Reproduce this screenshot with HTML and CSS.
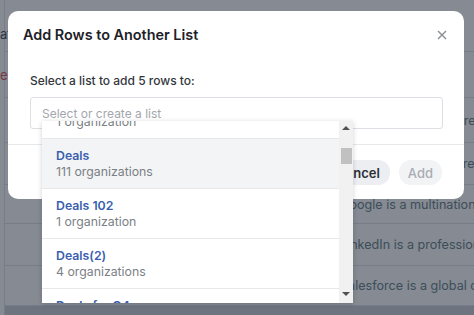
FILE: index.html
```html
<!DOCTYPE html>
<html lang="en">
<head>
    <meta charset="UTF-8">
    <meta name="viewport" content="width=device-width, initial-scale=1.0">
    <title>Add Rows to Another List</title>
    <link rel="stylesheet" href="styles.css">
</head>
<body>
    <!-- Tabel achter de modal -->
    <div class="table">
        <div class="row row-head"><span class="cell-left">ated</span></div>
        <div class="row row-2"><span class="cell-left red">ee</span></div>
        <div class="row row-3"><span class="cell-desc">Microsoft is a software company D</span></div>
        <div class="row row-4"><span class="cell-desc">Amazon is an online retail store o</span></div>
        <div class="row row-5"><span class="cell-desc">Google is a multinational technology</span></div>
        <div class="row row-6"><span class="cell-desc">LinkedIn is a professional network</span></div>
        <div class="row row-7"><span class="cell-desc">Salesforce is a global cloud company</span></div>
        <div class="table-foot"></div>
    </div>

    <div class="overlay"></div>

    <!-- Modal -->
    <div class="modal">
        <div class="modal-header">
            <h2>Add Rows to Another List</h2>
            <svg class="close" width="10" height="10" viewBox="0 0 10 10">
                <path d="M1 1 L9 9 M9 1 L1 9" stroke="#8a8d92" stroke-width="1.4" fill="none"/>
            </svg>
        </div>

        <div class="modal-body">
            <p class="label">Select a list to add 5 rows to:</p>
            <div class="select-wrap">
                <div class="select-input">Select or create a list</div>

                <div class="dropdown">
                    <div class="options">
                        <div class="option first">
                            <span class="opt-title">Deals 2023</span>
                            <span class="opt-sub">1 organization</span>
                        </div>
                        <div class="option active">
                            <span class="opt-title">Deals</span>
                            <span class="opt-sub">111 organizations</span>
                        </div>
                        <div class="option">
                            <span class="opt-title">Deals 102</span>
                            <span class="opt-sub">1 organization</span>
                        </div>
                        <div class="option">
                            <span class="opt-title">Deals(2)</span>
                            <span class="opt-sub">4 organizations</span>
                        </div>
                        <div class="option">
                            <span class="opt-title">Deals for Q4</span>
                            <span class="opt-sub">2 organizations</span>
                        </div>
                    </div>
                    <div class="scrollbar">
                        <span class="arrow up"></span>
                        <span class="thumb"></span>
                        <span class="arrow down"></span>
                    </div>
                </div>
            </div>
        </div>

        <div class="modal-footer">
            <button class="btn btn-cancel">Cancel</button>
            <button class="btn btn-add">Add</button>
        </div>
    </div>
</body>
</html>
```

FILE: styles.css
```css
/* Basis stijlen */
body {
    font-family: Inter, "Noto Sans", sans-serif;
    margin: 0;
    padding: 0;
    width: 474px;
    height: 315px;
    overflow: hidden;
    background: #fff;
    position: relative;
}

/* Tabel op de achtergrond */
.table {
    display: flex;
    flex-direction: column;
    height: 315px;
    border-left: 1px solid #e3e5e8;
    margin-left: 4px;
}

.row {
    display: flex;
    align-items: center;
    border-bottom: 1px solid #e3e5e8;
    font-size: 12.6px;
    color: #6f8688;
    white-space: nowrap;
    flex-shrink: 0;
}

.row-head {
    height: 51px;
    align-items: flex-end;
}
.row-head .cell-left { padding-bottom: 9px; }
.row-2 { height: 45px; }
.row-3 { height: 44px; }
.row-4 { height: 41px; }
.row-5 { height: 38px; }
.row-6 { height: 41px; }
.row-7 { height: 39px; }

.table-foot {
    flex: 1;
    background: #cfd2d6;
}

.cell-left {
    margin-left: -5px;
    font-size: 13px;
    color: #4f545b;
}

.cell-left.red {
    color: #e25a5a;
}

.cell-desc {
    padding-left: 335px;
}

.overlay {
    position: absolute;
    inset: 0;
    background: rgba(11, 21, 39, 0.5);
}

/* Modal */
.modal {
    position: absolute;
    left: 8px;
    top: 11px;
    width: 456px;
    height: 188px;
    background: #fff;
    border-radius: 10px;
    display: flex;
    flex-direction: column;
}

.modal-header {
    display: flex;
    justify-content: space-between;
    align-items: center;
    padding: 15px 17px 0 15px;
}

.modal-header h2 {
    margin: 0;
    font-size: 14.4px;
    line-height: 18px;
    font-weight: 600;
    color: #1d2127;
}

.modal-body {
    padding: 0 21px 15px 22px;
    border-bottom: 1px solid #e6e8eb;
}

.label {
    margin: 29px 0 8px;
    font-size: 12px;
    line-height: 16px;
    font-weight: 500;
    color: #33373d;
}

.select-wrap {
    position: relative;
}

.select-input {
    height: 30px;
    border: 1px solid #dcdfe3;
    border-radius: 3px;
    padding-left: 11px;
    font-size: 12px;
    line-height: 32px;
    color: #a3a7ad;
}

/* Dropdown lijst */
.dropdown {
    position: absolute;
    left: 12px;
    top: 24px;
    width: 311px;
    height: 182px;
    background: #fff;
    box-shadow: 0 1px 5px rgba(0, 0, 0, 0.18);
    display: flex;
    overflow: hidden;
    z-index: 2;
}

.options {
    flex: 1;
    overflow: hidden;
}

.option {
    height: 49px;
    border-bottom: 1px solid #e6e8eb;
    padding-left: 14px;
    display: flex;
    flex-direction: column;
    justify-content: center;
    font-size: 12.3px;
    line-height: 16px;
}

.option.first {
    margin-top: -32px;
}

.option.active {
    background: #f3f4f6;
}

.opt-title {
    color: #3b5fae;
    font-weight: 600;
}

.opt-sub {
    color: #7b7f85;
}

.scrollbar {
    width: 14px;
    background: #f1f1f1;
    display: flex;
    flex-direction: column;
    align-items: center;
    position: relative;
}

.arrow {
    width: 0;
    height: 0;
    border-left: 4px solid transparent;
    border-right: 4px solid transparent;
}

.arrow.up {
    margin-top: 5px;
    border-bottom: 4px solid #505050;
}

.arrow.down {
    margin-top: auto;
    margin-bottom: 7px;
    border-top: 4px solid #505050;
}

.thumb {
    width: 11px;
    height: 16px;
    margin-top: 18px;
    background: #c1c1c1;
}

/* Knoppen */
.modal-footer {
    display: flex;
    justify-content: flex-end;
    gap: 9px;
    padding: 15px 22px 0 0;
}

.btn {
    height: 25px;
    border: none;
    border-radius: 12px;
    padding: 0 10px;
    font-family: inherit;
    font-size: 13px;
    font-weight: 600;
}

.btn-cancel {
    background: #eceef1;
    color: #2c3036;
}

.btn-add {
    padding: 0 9px;
    background: #f2f3f5;
    color: #a9adb3;
    font-weight: 500;
}
```
